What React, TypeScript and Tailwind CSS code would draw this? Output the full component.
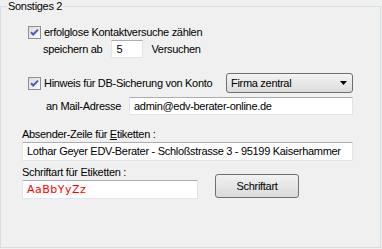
import type { ReactNode } from "react";

const font = { fontFamily: '"Liberation Sans", Arial, sans-serif' };

function CheckBox() {
  return (
    <svg width="13" height="13" viewBox="0 0 13 13" className="shrink-0">
      <defs>
        <linearGradient id="cbg" x1="0" y1="0" x2="1" y2="1">
          <stop offset="0" stopColor="#d8d8d8" />
          <stop offset="1" stopColor="#ffffff" />
        </linearGradient>
      </defs>
      <rect x="0.5" y="0.5" width="12" height="12" fill="url(#cbg)" stroke="#8e8f8f" />
      <path d="M3 6.2 L5.2 8.5 L10 3.6" fill="none" stroke="#4a5cc0" strokeWidth="2" />
    </svg>
  );
}

function Field({ className, children }: { className: string; children?: ReactNode }) {
  return (
    <div
      className={`flex items-center overflow-hidden whitespace-nowrap border border-[#e2e6ec] border-t-[#abadb3] bg-white pl-[4px] text-[11px] text-black ${className}`}
    >
      {children}
    </div>
  );
}

export default function App() {
  return (
    <div
      className="h-[249px] w-[382px] whitespace-nowrap bg-[#f0f0f0] pt-[6px] text-[11px] leading-[13px] tracking-[-0.3px] text-black"
      style={font}
    >
      <div className="relative h-[242px] w-[381px] border border-[#d5dfe5]">
        <div className="absolute -top-[7px] left-[6px] bg-[#f0f0f0] px-[1px] leading-[13px]">Sonstiges 2</div>

        <div className="flex flex-col pl-[27px] pt-[19px]">
          <div className="flex h-[13px] items-center gap-[3px]">
            <CheckBox />
            <span>erfolglose Kontaktversuche zählen</span>
          </div>

          <div className="mt-[1px] flex h-[18px] items-center pl-[15px]">
            <span>speichern ab</span>
            <Field className="ml-[9px] h-[18px] w-[32px]">5</Field>
            <span className="ml-[8px]">Versuchen</span>
          </div>

          <div className="mt-[15px] flex h-[20px] items-center">
            <CheckBox />
            <span className="ml-[3px]">Hinweis für DB-Sicherung von Konto</span>
            <div className="ml-auto mr-[27px] flex h-[20px] w-[127px] items-center justify-between rounded-[3px] border border-[#707070] bg-gradient-to-b from-[#f4f4f4] to-[#dcdcdc] pl-[4px] pr-[5px]">
              <span>Firma zentral</span>
              <svg width="7" height="4" viewBox="0 0 7 4">
                <path d="M0 0 H7 L3.5 4 Z" fill="#000" />
              </svg>
            </div>
          </div>

          <div className="mt-[4px] flex h-[18px] items-center pl-[18px]">
            <span>an Mail-Adresse</span>
            <Field className="ml-auto mr-[27px] h-[18px] w-[224px]">admin@edv-berater-online.de</Field>
          </div>
        </div>

        <div className="flex flex-col pl-[21px] pr-[27px]">
          <div className="mt-[13px] h-[13px]">
            Absender-Zeile für <span className="underline">E</span>tiketten :
          </div>
          <Field className="mt-[1px] h-[19px] w-[331px]">Lothar Geyer EDV-Berater - Schloßstrasse 3 - 95199 Kaiserhammer</Field>

          <div className="mt-[5px] flex items-end">
            <div className="flex flex-col">
              <div className="h-[13px]">Schriftart für Etiketten :</div>
              <Field className="mt-[1px] h-[19px] w-[176px]">
                <span
                  className="text-[11px] tracking-[0.5px] text-[#ff0000]"
                  style={{ fontFamily: '"DejaVu Sans", sans-serif' }}
                >
                  AaBbYyZz
                </span>
              </Field>
            </div>
            <button className="mb-[1px] ml-[17px] h-[24px] w-[84px] rounded-[3px] border border-[#707070] bg-gradient-to-b from-[#f2f2f2] to-[#dadada] text-[11px]">
              Schriftart
            </button>
          </div>
        </div>
      </div>
    </div>
  );
}
